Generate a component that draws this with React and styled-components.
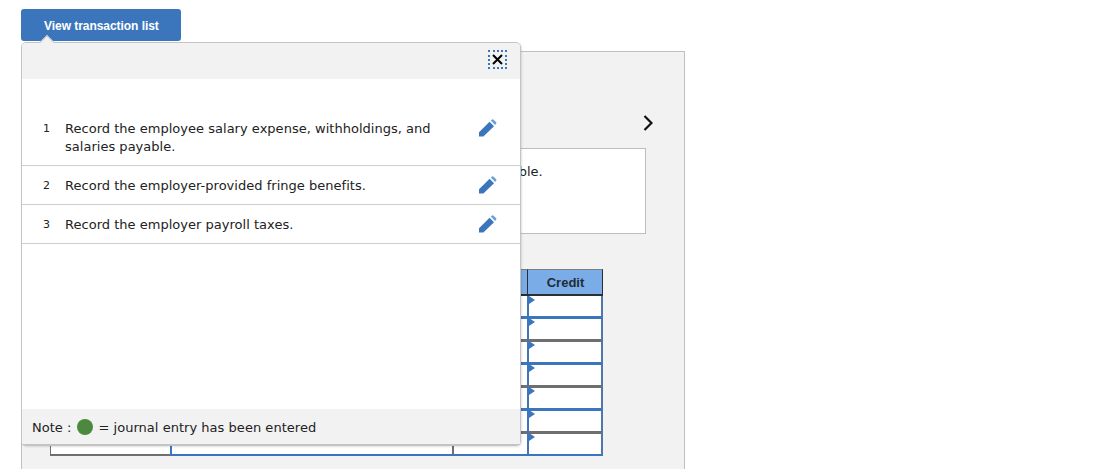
import React from "react";
import styled, { createGlobalStyle } from "styled-components";

const Global = createGlobalStyle`
  html, body { margin: 0; padding: 0; background: #fff; }
  body { font-family: Verdana, "DejaVu Sans", sans-serif; color: #222; overflow: hidden; }
`;

const Stage = styled.div`
  position: relative;
  height: 469px;
  overflow: hidden;
  padding: 9px 0 0 21px;
  box-sizing: border-box;
`;

const ListButton = styled.button`
  display: block;
  width: 160px;
  height: 32px;
  padding: 2px 0 0 23px;
  border: 0;
  border-radius: 3px;
  background: #3b76bd;
  color: #fff;
  font: bold 12px Arial, "Liberation Sans", sans-serif;
  letter-spacing: -0.05px;
  text-align: left;
`;

const Panel = styled.section`
  width: 664px;
  height: 420px;
  margin-top: 10px;
  box-sizing: border-box;
  padding: 63px 38px 0 28px;
  background: #f2f2f2;
  border: 1px solid #c0c0c0;
  border-bottom: 0;
`;

const NavRow = styled.div`
  display: flex;
  justify-content: flex-end;
  height: 16px;
  margin-right: -7px;
`;

const Prompt = styled.div`
  height: 86px;
  margin-top: 17px;
  box-sizing: border-box;
  padding: 14px 13px;
  background: #fff;
  border: 1px solid #bdbdbd;
  font-size: 13px;
  line-height: 18px;
  white-space: nowrap;
`;

const Journal = styled.table`
  width: 553px;
  margin-top: 35px;
  border-collapse: separate;
  border-spacing: 0;
  table-layout: fixed;
`;

const HeadCell = styled.th`
  height: 27px;
  box-sizing: border-box;
  padding: 1px 0 0 1px;
  background: #7aade8;
  border-top: 1px solid #7d7d7d;
  border-bottom: 2px solid #2a2f36;
  border-left: 1px solid #2a2f36;
  border-right: ${(p) => (p.$last ? "1px solid #2a2f36" : "0")};
  color: #222b36;
  font: bold 13px Arial, "Liberation Sans", sans-serif;
`;

const Cell = styled.td`
  position: relative;
  height: ${(p) => (p.$top ? "23px" : "22px")};
  box-sizing: border-box;
  padding: 0;
  background: #fff;
  border-top: ${(p) => (p.$top ? `1px solid ${p.$top}` : "0")};
  border-bottom: 2px solid ${(p) => p.$line};
  border-left: ${(p) => p.$left};
  border-right: ${(p) => p.$right || "0"};
`;

const Marker = styled.span`
  position: absolute;
  top: ${(p) => (p.$first ? "0" : "-1px")};
  left: 0;
  width: 0;
  height: 0;
  border-left: 6px solid #3b76bd;
  border-top: 4px solid transparent;
  border-bottom: 4px solid transparent;
`;

const Popup = styled.aside`
  position: absolute;
  top: 42px;
  left: 21px;
  width: 500px;
  height: 404px;
  box-sizing: border-box;
  display: flex;
  flex-direction: column;
  background: #fff;
  border: 1px solid #c4c4c4;
  border-radius: 5px;
  box-shadow: 1px 1px 2px rgba(0, 0, 0, 0.12);

  &::before {
    content: "";
    position: absolute;
    top: -6px;
    left: 20px;
    width: 9px;
    height: 9px;
    background: #f2f2f2;
    border-top: 1px solid #c4c4c4;
    border-left: 1px solid #c4c4c4;
    transform: rotate(45deg);
  }
`;

const PopupHead = styled.header`
  position: relative;
  display: flex;
  justify-content: flex-end;
  align-items: flex-start;
  height: 36px;
  padding: 7px 13px 0 0;
  box-sizing: border-box;
  background: #f2f2f2;
  border-radius: 4px 4px 0 0;
`;

const CloseButton = styled.button`
  display: flex;
  align-items: center;
  justify-content: center;
  width: 19px;
  height: 19px;
  padding: 0;
  box-sizing: border-box;
  background: transparent;
  border: 2px dotted #3b76bd;
`;

const TaskList = styled.ol`
  list-style: none;
  margin: 30px 0 0;
  padding: 0;
`;

const Task = styled.li`
  display: grid;
  grid-template-columns: 21px 22px 414px 18px;
  padding: 11px 0 9px;
  border-bottom: 1px solid #cfcfcf;
  font-size: 13px;
  line-height: 18px;
  letter-spacing: 0.02px;
`;

const TaskNumber = styled.span`
  grid-column: 2;
  font-size: 11px;
`;

const TaskText = styled.span`
  grid-column: 3;
  max-width: 380px;
  color: #222;
`;

const EditIcon = styled.svg`
  grid-column: 4;
  display: block;
  margin-top: -1px;
`;

const Footer = styled.footer`
  display: flex;
  align-items: center;
  gap: 5px;
  height: 36px;
  margin-top: auto;
  padding: 1px 0 0 10px;
  background: #f2f2f2;
  border-bottom: 1px solid #c4c4c4;
  box-sizing: border-box;
  font-size: 13px;
  letter-spacing: 0.03px;
`;

const Dot = styled.span`
  width: 16px;
  height: 16px;
  margin: -1px 0 0 1px;
  border-radius: 50%;
  background: #4d883f;
`;

const Pencil = () => (
  <EditIcon width="18" height="18" viewBox="0 0 18 18" aria-hidden="true">
    <path d="M0 17.5V13.2L10.6 2.8L15 7.2L4.4 17.5Z" fill="#3b76bd" />
    <path d="M11.8 1.6L13 .5Q13.6 0 14.3.5L17.2 3.3Q17.8 4 17.2 4.6L16.1 5.9Z" fill="#6f9ed6" />
  </EditIcon>
);

const tasks = [
  "Record the employee salary expense, withholdings, and salaries payable.",
  "Record the employer-provided fringe benefits.",
  "Record the employer payroll taxes.",
];

const BLUE = "#3b76bd";
const GREY = "#6f6f6f";

export default function App() {
  return (
    <Stage>
      <Global />
      <ListButton>View transaction list</ListButton>
      <Panel>
        <NavRow>
          <svg width="10" height="16" viewBox="0 0 10 16" aria-hidden="true">
            <path d="M1.5 1L8.5 8L1.5 15" fill="none" stroke="#111" strokeWidth="2.2" />
          </svg>
        </NavRow>
        <Prompt>Record the employee salary expense, withholdings, and salaries payable.</Prompt>
        <Journal>
          <colgroup>
            <col style={{ width: 120 }} />
            <col style={{ width: 282 }} />
            <col style={{ width: 75 }} />
            <col style={{ width: 76 }} />
          </colgroup>
          <thead>
            <tr>
              <HeadCell />
              <HeadCell />
              <HeadCell />
              <HeadCell $last>Credit</HeadCell>
            </tr>
          </thead>
          <tbody>
            {[0, 1, 2, 3, 4, 5, 6].map((r) => {
              const line = r % 2 === 0 ? BLUE : GREY;
              const top = r === 0 ? null : r % 2 === 0 ? GREY : BLUE;
              return (
                <tr key={r}>
                  <Cell $line={GREY} $top={top && GREY} $left={`1px solid ${GREY}`} />
                  <Cell $line={line} $top={top} $left={`2px solid ${BLUE}`} />
                  <Cell $line={line} $top={top} $left={`2px solid ${GREY}`} />
                  <Cell $line={line} $top={top} $left={`2px solid ${BLUE}`} $right="2px solid #4f78aa">
                    <Marker $first={r === 0} />
                  </Cell>
                </tr>
              );
            })}
          </tbody>
        </Journal>
      </Panel>
      <Popup>
        <PopupHead>
          <CloseButton aria-label="Close">
            <svg width="11" height="11" viewBox="0 0 11 11" aria-hidden="true">
              <path d="M1 1L10 10M10 1L1 10" stroke="#000" strokeWidth="2" />
            </svg>
          </CloseButton>
        </PopupHead>
        <TaskList>
          {tasks.map((t, i) => (
            <Task key={t}>
              <TaskNumber>{i + 1}</TaskNumber>
              <TaskText>{t}</TaskText>
              <Pencil />
            </Task>
          ))}
        </TaskList>
        <Footer>
          Note :<Dot />= journal entry has been entered
        </Footer>
      </Popup>
    </Stage>
  );
}
